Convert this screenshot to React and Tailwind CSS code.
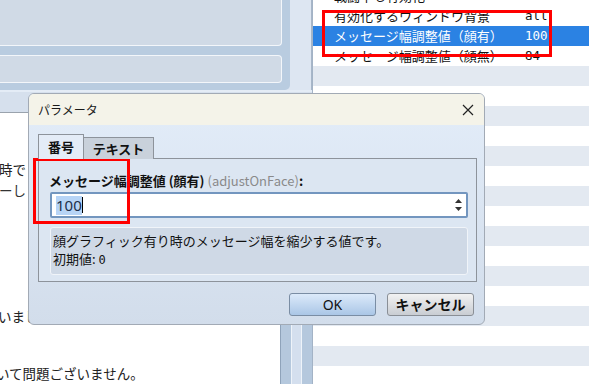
export default function App() {
  const jp = "font-['Noto_Sans_CJK_JP','Noto_Sans',sans-serif]";
  const rows = [
    { label: '戦闘中も有効化', value: 'true' },
    { label: '有効化するウィンドウ背景', value: 'all' },
    { label: 'メッセージ幅調整値（顔有）', value: '100', sel: true },
    { label: 'メッセージ幅調整値（顔無）', value: '84' },
  ];
  const empty = Array.from({ length: 16 });
  return (
    <div className={"relative w-[589px] h-[384px] overflow-hidden bg-white flex " + jp}>
      {/* left column */}
      <div className="w-[312px] flex flex-col shrink-0">
        <div className="h-[90px] flex bg-[#dde6f2]">
          <div className="w-[290px] h-[90px] bg-[#b9cce0] rounded-br-[5px] flex flex-col gap-[9px] pr-[8px]">
            <div className="h-[46px] bg-[#d0dae6] border-b border-r border-[#f3f6fa] rounded-br-[4px]"></div>
            <div className="h-[28px] bg-[#d0dae6] border-y border-r border-[#f3f6fa] rounded-r-[4px]"></div>
          </div>
          <div className="flex-1 border-r border-[#a7b6c8]"></div>
        </div>
        <div className="h-[3px] bg-[#e4ecf6]"></div>
        <div className="h-[34px] bg-[#d6e0ed] border-b border-[#9aa3ad]"></div>
        <div className="flex-1 flex">
          <div className="w-[280px] bg-white text-[13.5px] text-[#222] leading-[21px]">
            <div className="mt-[46px] ml-[-1px]">時で</div>
            <div className="ml-[-1px] text-[#333]">ーし</div>
            <div className="mt-[105px] ml-[-2px]">いました。</div>
            <div className="mt-[36px] ml-[-4px]">いて問題ございません。</div>
          </div>
          <div className="w-[32px] flex border-l border-[#8fa3ba]">
            <div className="w-[10px] bg-[#b5c8dd]"></div>
            <div className="w-[11px] bg-[#d4dfee] border-x border-[#eef3f9]"></div>
            <div className="w-[10px] bg-[#b5c8dd]"></div>
          </div>
        </div>
      </div>
      {/* right list */}
      <div className="flex-1 flex flex-col mt-[-14px] border-l border-[#a3b3c6] text-[13px]">
        {rows.map((r, i) => (
          <div
            key={i}
            className={
              'h-[20px] shrink-0 flex items-center pl-[21px] ' +
              (r.sel ? 'bg-[#2b82e3] text-white' : 'bg-white text-[#111]')
            }
          >
            <span className="w-[191px] whitespace-nowrap">{r.label}</span>
            <span className="font-['DejaVu_Sans_Mono',monospace] text-[12.5px]">{r.value}</span>
          </div>
        ))}
        {empty.map((_, i) => (
          <div key={i} className={'h-[20px] shrink-0 ' + (i % 2 === 0 ? 'bg-[#e3e9f1]' : 'bg-white')}></div>
        ))}
      </div>

      {/* red annotation on list */}
      <div className="absolute left-[322px] top-[10px] w-[230px] h-[47px] border-[3px] border-[#ff0000]"></div>

      {/* dialog */}
      <div className="absolute left-[28px] top-[93px] w-[457px] h-[232px] rounded-[6px] border border-[#a2aab5] overflow-hidden flex flex-col bg-gradient-to-b from-[#e3edf9] to-[#d2ddeb]">
        <div className="h-[31px] bg-[#f4f3e9] flex items-center justify-between pl-[9px] pr-[9px] shrink-0">
          <span className="text-[12px] text-[#1a1a1a]">パラメータ</span>
          <svg width="12" height="12" viewBox="0 0 12 12" className="mr-[1px]">
            <path d="M1 1 L11 11 M11 1 L1 11" stroke="#222" strokeWidth="1.2" />
          </svg>
        </div>
        <div className="flex-1 flex flex-col px-[9px] pt-[9px]">
          <div className="flex items-end h-[25px] relative z-10">
            <div className="w-[46px] h-[25px] bg-[#e4ecf7] border border-b-0 border-[#8d939b] flex items-center justify-center text-[13px] font-bold text-[#111]">
              番号
            </div>
            <div className="w-[70px] h-[22px] bg-[#c9d1db] border border-l-0 border-[#8d939b] border-b-0 flex items-center justify-center text-[13px] font-bold text-[#111]">
              テキスト
            </div>
          </div>
          <div className="w-[439px] h-[124px] mt-[-1px] border border-[#8d939b] bg-[#dce6f2] px-[10px] pt-[13px]">
            <div className="text-[13px] leading-[18px] whitespace-nowrap">
              <span className="font-bold text-[#111]">メッセージ幅調整値 (顔有) </span>
              <span className="text-[#8a8a8a]">(adjustOnFace)</span>
              <span className="font-bold text-[#111]">:</span>
            </div>
            <div className="mt-[2px] ml-[1px] w-[418px] h-[26px] bg-white border-2 border-[#7396bf] rounded-[2px] flex items-center pl-[4px] pr-[4px]">
              <span className="bg-[#b7d4f6] text-[15px] leading-[19px] text-[#1c2f48] font-['Noto_Sans',sans-serif]">100</span>
              <span className="w-[1px] h-[16px] bg-black"></span>
              <div className="ml-auto flex flex-col gap-[4px] items-center">
                <svg width="7" height="4" viewBox="0 0 7 4"><path d="M3.5 0 L7 4 L0 4 Z" fill="#333" /></svg>
                <svg width="7" height="4" viewBox="0 0 7 4"><path d="M0 0 L7 0 L3.5 4 Z" fill="#333" /></svg>
              </div>
            </div>
            <div className="mt-[9px] ml-[1px] w-[418px] h-[48px] bg-[#cfd9e6] border border-[#f0f4f9] rounded-[3px] px-[2px] pt-[4px] text-[13px] leading-[18px] text-[#111]">
              <div>顔グラフィック有り時のメッセージ幅を縮少する値です。</div>
              <div>
                初期値: <span className="font-['DejaVu_Sans_Mono',monospace] text-[12px]">0</span>
              </div>
            </div>
          </div>
          <div className="flex justify-end gap-[11px] mt-[11px] pr-[1px]">
            <div className="w-[87px] h-[23px] rounded-[3px] border border-[#7a8da4] bg-gradient-to-b from-[#dceafa] to-[#aac6e6] flex items-center justify-center text-[14px] text-[#111] font-['Noto_Sans',sans-serif]">
              OK
            </div>
            <div className="w-[87px] h-[23px] rounded-[3px] border border-[#8a8f96] bg-gradient-to-b from-[#f2f2f2] to-[#c9cdd3] flex items-center justify-center text-[14px] font-bold text-[#111]">
              キャンセル
            </div>
          </div>
        </div>
      </div>

      {/* red annotation in dialog */}
      <div className="absolute left-[33px] top-[158px] w-[97px] h-[66px] border-[3px] border-[#ff0000]"></div>
    </div>
  );
}
